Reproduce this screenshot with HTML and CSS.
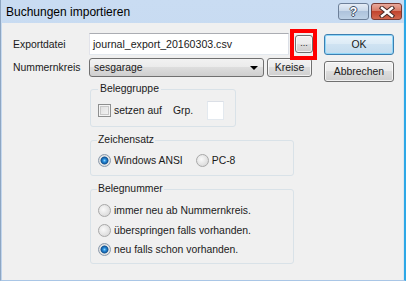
FILE: index.html
```html
<!DOCTYPE html>
<html lang="de">
<head>
<meta charset="utf-8">
<title>Buchungen importieren</title>
<link rel="stylesheet" href="styles.css">
</head>
<body>
<div class="window">
  <div class="titlebar">
    <span class="title">Buchungen importieren</span>
    <div class="tbtns">
      <span class="tbtn help"><span class="q">?</span></span>
      <span class="tbtn close">
        <svg width="16" height="12" viewBox="0 0 16 12"><path d="M3 2 L13 10 M13 2 L3 10" stroke="#4a2a26" stroke-width="4.4" stroke-linecap="square"/><path d="M3 2 L13 10 M13 2 L3 10" stroke="#fff" stroke-width="2.4" stroke-linecap="square"/></svg>
      </span>
    </div>
  </div>
  <div class="client">
    <div class="main">
      <div class="row r1">
        <span class="lbl">Exportdatei</span>
        <span class="input">journal_export_20160303.csv</span>
        <span class="browse"><span class="btn dots">...</span><span class="hl"></span></span>
      </div>
      <div class="row r2">
        <span class="lbl">Nummernkreis</span>
        <span class="combo"><span>sesgarage</span><span class="arrow"></span></span>
        <span class="btn kreise">Kreise</span>
      </div>
      <div class="groups">
        <fieldset class="grp g1">
          <legend class="lg1">Beleggruppe</legend>
          <div class="line">
            <span class="chk"></span><span class="t">setzen auf</span>
            <span class="grp-lbl">Grp.</span><span class="small-input"></span>
          </div>
        </fieldset>
        <fieldset class="grp g2">
          <legend>Zeichensatz</legend>
          <div class="line">
            <span class="radio on"></span><span class="t">Windows ANSI</span>
            <span class="radio second"></span><span class="t">PC-8</span>
          </div>
        </fieldset>
        <fieldset class="grp g3">
          <legend>Belegnummer</legend>
          <div class="opt"><span class="radio"></span><span class="t">immer neu ab Nummernkreis.</span></div>
          <div class="opt"><span class="radio"></span><span class="t">überspringen falls vorhanden.</span></div>
          <div class="opt"><span class="radio on"></span><span class="t">neu falls schon vorhanden.</span></div>
        </fieldset>
      </div>
    </div>
    <div class="side">
      <span class="btn ok">OK</span>
      <span class="btn cancel">Abbrechen</span>
    </div>
  </div>
</div>
</body>
</html>
```
FILE: styles.css
```css
* { box-sizing: border-box; }
html, body { margin: 0; padding: 0; }
body {
  width: 406px; height: 281px; overflow: hidden;
  font-family: "Liberation Sans", Arial, sans-serif;
  font-size: 10.4px; color: #1a1a1a;
  background: #c4d8ef;
}
.window {
  width: 406px; height: 281px;
  display: flex; flex-direction: column;
  background: linear-gradient(#c9dcf2, #bfd4ed);
  border-left: 1px solid #8ea6c2;
  border-right: 2px solid #2ea8e6;
  border-bottom: 1px solid #a9c6e6;
}
.titlebar {
  height: 23px; flex: none;
  display: flex; align-items: flex-start; justify-content: space-between;
}
.title {
  font-size: 12px; margin: 5px 0 0 5px; color: #000; line-height: 14px;
}
.tbtns { display: flex; gap: 2px; margin: 3px 2px 0 0; }
.tbtn {
  width: 31px; height: 17px; border-radius: 3px;
  display: flex; align-items: center; justify-content: center;
}
.help {
  border: 1px solid #6d8099;
  background: linear-gradient(#e4ecf6 0%, #cad9ea 45%, #aec3dc 50%, #bdd1e6 100%);
}
.q {
  font: bold 12px "Liberation Sans", Arial, sans-serif; color: #fff;
  text-shadow: 1px 0 #3d4f66, -1px 0 #3d4f66, 0 1px #3d4f66, 0 -1px #3d4f66;
  line-height: 12px;
}
.close {
  border: 1px solid #7a3a33;
  background: linear-gradient(#e9a99c 0%, #d77c68 45%, #c2442e 50%, #d2684f 100%);
}
.client {
  flex: 1; display: flex;
  background: #f0f0f0;
  margin-left: 1px;
  border-right: 1px solid #dfe6ee;
}
.main { width: 321px; padding: 10px 0 0 11px; display: flex; flex-direction: column; }
.row { display: flex; align-items: center; }
.lbl { width: 76px; }
.r1 { height: 22px; }
.input {
  width: 200px; height: 22px; background: #fff;
  border: 1px solid #abadb3; border-color: #abadb3 #dbdfe6 #e3e9ef #e2e3ea;
  padding: 0 0 0 3px; display: flex; align-items: center;
  font-size: 10.6px;
}
.browse { position: relative; margin-left: 6px; display: flex; }
.btn {
  display: flex; align-items: center; justify-content: center;
  border: 1px solid #707070; border-radius: 3px;
  background: linear-gradient(#f2f2f2 0%, #ebebeb 49%, #dddddd 50%, #cfcfcf 100%);
  box-shadow: inset 0 0 0 1px rgba(255,255,255,0.7);
}
.dots { width: 18px; height: 18px; font-size: 9px; padding-bottom: 2px; }
.hl {
  position: absolute; left: -5px; top: -6px; width: 27px; height: 31px;
  border: 4px solid #ff0000;
}
.r2 { height: 19px; margin-top: 3px; }
.combo {
  width: 175px; height: 19px; border: 1px solid #707070; border-radius: 3px;
  background: linear-gradient(#f2f2f2 0%, #ebebeb 49%, #dddddd 50%, #cfcfcf 100%);
  display: flex; align-items: center; justify-content: space-between;
  padding: 0 4px 0 4px;
}
.arrow {
  width: 0; height: 0;
  border-left: 4px solid transparent; border-right: 4px solid transparent;
  border-top: 4px solid #000; margin-right: 1px;
}
.kreise { width: 45px; height: 19px; margin-left: 3px; }
.groups { margin-left: 77px; margin-top: 6px; display: flex; flex-direction: column; }
.grp {
  margin: 0; border: 1px solid #d9e2e8; border-radius: 3px;
  padding: 0 6px 6px 6px; min-width: 0;
}
legend { padding: 0 1px; line-height: 12px; }
.lg1 { margin-left: 1px; padding: 0 2px; }
.g1 { width: 146px; }
.g2 { width: 204px; margin-top: 7px; padding-bottom: 8px; }
.g3 { width: 204px; margin-top: 7px; padding-bottom: 7px; }
.line { display: flex; align-items: center; }
.g1 .line { height: 19px; margin-top: 6px; }
.g2 .line { height: 13px; margin-top: 8px; }
.chk {
  width: 13px; height: 13px; border: 1px solid #8e8f8f; margin-left: 1px;
  background: linear-gradient(135deg, #dcdcdc, #f6f6f6);
  box-shadow: inset 0 0 0 1px #f4f4f4, inset 0 0 0 2px #c8c8c8;
}
.t { margin-left: 3px; }
.grp-lbl { margin-left: 11px; }
.small-input {
  width: 17px; height: 19px; margin-left: 14px; background: #fff;
  border: 1px solid #e3e9ef; border-top-color: #dbdfe6;
}
.radio {
  width: 13px; height: 13px; border-radius: 50%; flex: none; margin-left: 1px;
  border: 1px solid #a8a8a8;
  background: radial-gradient(circle at 40% 40%, #fafafa 0%, #e2e2e2 60%, #d0d0d0 100%);
}
.radio.on {
  border-color: #8a9aac;
  background: radial-gradient(circle at 50% 50%, #8fd6ff 0, #2a8fdc 1.5px, #155a9e 3.2px, #3b6f9c 3.8px, #e8e8e8 4.3px, #d6d6d6 6px);
}
.radio.second { margin-left: 13px; }
.opt { display: flex; align-items: center; height: 13px; }
.g3 .opt:first-of-type { margin-top: 9px; }
.g3 .opt + .opt { margin-top: 6.5px; }
.side { display: flex; flex-direction: column; padding: 11px 0 0 1px; gap: 6px; }
.ok, .cancel { width: 70px; height: 21px; }
.ok {
  border-color: #3c7fb1;
  background: linear-gradient(#eaf4fb 0%, #dcebf6 49%, #cfe3f2 50%, #c4dcee 100%);
  box-shadow: inset 0 0 0 1px #8fd6f8;
}
```
